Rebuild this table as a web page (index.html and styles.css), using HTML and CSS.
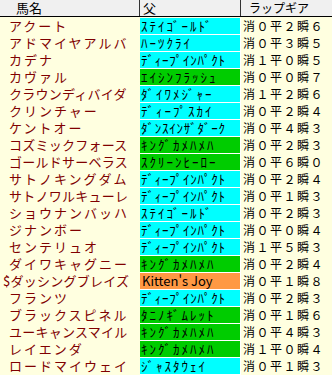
FILE: index.html
```html
<!DOCTYPE html>
<html lang="ja">
<head>
<meta charset="utf-8">
<title>ラップギア</title>
<link rel="stylesheet" href="styles.css">
</head>
<body>
<div class="table">
  <div class="head">
    <div class="h h-name">馬名</div>
    <div class="h h-sire">父</div>
    <div class="h h-lap">ラップギア</div>
  </div>
  <div class="row"><div class="name">アクート</div><div class="sire cyan">ｽﾃｲｺﾞｰﾙﾄﾞ</div><div class="lap">消０平２瞬６</div></div>
  <div class="row"><div class="name">アドマイヤアルバ</div><div class="sire cyan">ﾊｰﾂｸﾗｲ</div><div class="lap">消０平３瞬５</div></div>
  <div class="row"><div class="name">カデナ</div><div class="sire cyan tight">ﾃﾞｨｰﾌﾟｲﾝﾊﾟｸﾄ</div><div class="lap">消１平０瞬５</div></div>
  <div class="row"><div class="name">カヴァル</div><div class="sire green">ｴｲｼﾝﾌﾗｯｼｭ</div><div class="lap">消０平０瞬７</div></div>
  <div class="row"><div class="name tight">クラウンディバイダ</div><div class="sire cyan">ﾀﾞｲﾜﾒｼﾞｬｰ</div><div class="lap">消１平２瞬６</div></div>
  <div class="row"><div class="name">クリンチャー</div><div class="sire cyan">ﾃﾞｨｰﾌﾟｽｶｲ</div><div class="lap">消０平２瞬４</div></div>
  <div class="row"><div class="name">ケントオー</div><div class="sire cyan tight">ﾀﾞﾝｽｲﾝｻﾞﾀﾞｰｸ</div><div class="lap">消０平４瞬３</div></div>
  <div class="row"><div class="name tight">コズミックフォース</div><div class="sire green">ｷﾝｸﾞｶﾒﾊﾒﾊ</div><div class="lap">消０平２瞬３</div></div>
  <div class="row"><div class="name tight">ゴールドサーベラス</div><div class="sire green">ｽｸﾘｰﾝﾋｰﾛｰ</div><div class="lap">消０平６瞬０</div></div>
  <div class="row"><div class="name">サトノキングダム</div><div class="sire cyan tight">ﾃﾞｨｰﾌﾟｲﾝﾊﾟｸﾄ</div><div class="lap">消０平２瞬４</div></div>
  <div class="row"><div class="name tight">サトノワルキューレ</div><div class="sire cyan tight">ﾃﾞｨｰﾌﾟｲﾝﾊﾟｸﾄ</div><div class="lap">消０平１瞬３</div></div>
  <div class="row"><div class="name">ショウナンバッハ</div><div class="sire cyan">ｽﾃｲｺﾞｰﾙﾄﾞ</div><div class="lap">消０平２瞬３</div></div>
  <div class="row"><div class="name">ジナンボー</div><div class="sire cyan tight">ﾃﾞｨｰﾌﾟｲﾝﾊﾟｸﾄ</div><div class="lap">消０平０瞬４</div></div>
  <div class="row"><div class="name">センテリュオ</div><div class="sire cyan tight">ﾃﾞｨｰﾌﾟｲﾝﾊﾟｸﾄ</div><div class="lap">消１平５瞬３</div></div>
  <div class="row"><div class="name">ダイワキャグニー</div><div class="sire green">ｷﾝｸﾞｶﾒﾊﾒﾊ</div><div class="lap">消０平２瞬４</div></div>
  <div class="row"><div class="name tight dollar">$ダッシングブレイズ</div><div class="sire orange latin">Kitten's Joy</div><div class="lap">消０平１瞬８</div></div>
  <div class="row"><div class="name">フランツ</div><div class="sire cyan tight">ﾃﾞｨｰﾌﾟｲﾝﾊﾟｸﾄ</div><div class="lap">消０平２瞬３</div></div>
  <div class="row"><div class="name">ブラックスピネル</div><div class="sire green">ﾀﾆﾉｷﾞﾑﾚｯﾄ</div><div class="lap">消０平１瞬６</div></div>
  <div class="row"><div class="name tight">ユーキャンスマイル</div><div class="sire green">ｷﾝｸﾞｶﾒﾊﾒﾊ</div><div class="lap">消０平４瞬３</div></div>
  <div class="row"><div class="name">レイエンダ</div><div class="sire green">ｷﾝｸﾞｶﾒﾊﾒﾊ</div><div class="lap">消１平０瞬４</div></div>
  <div class="row"><div class="name">ロードマイウェイ</div><div class="sire cyan">ｼﾞｬｽﾀｳｪｲ</div><div class="lap">消０平１瞬３</div></div>
</div>
</body>
</html>
```
FILE: styles.css
```css
* {
  box-sizing: border-box;
}

html, body {
  margin: 0;
  padding: 0;
  background: #ffffe0;
}

body {
  font-family: "Noto Sans CJK JP", "Noto Sans", sans-serif;
  width: 332px;
  height: 375px;
}

.table {
  display: flex;
  flex-direction: column;
}

.head {
  display: grid;
  grid-template-columns: 140px 101px 1fr;
  height: 17px;
  background: #f0f0f0;
  border-bottom: 1px solid #000;
  margin-bottom: 1px;
}

.h {
  font-size: 13px;
  line-height: 16px;
  color: #000;
  white-space: nowrap;
}

.h-name {
  padding-left: 16px;
  border-right: 1px solid #333;
}

.h-sire {
  padding-left: 3px;
  border-right: 1px solid #333;
}

.h-lap {
  padding-left: 8px;
  font-size: 12px;
}

.row {
  display: grid;
  grid-template-columns: 140px 101px 1fr;
  height: 17px;
}

.name {
  padding-left: 9px;
  font-size: 13px;
  line-height: 16px;
  letter-spacing: 2px;
  color: #800000;
  white-space: nowrap;
}

.name.tight {
  letter-spacing: 0.25px;
}

.name.dollar {
  padding-left: 3px;
}

.sire {
  padding-left: 1px;
  font-size: 13px;
  line-height: 16px;
  letter-spacing: 2px;
  color: #000;
  white-space: nowrap;
  border-right: 1px solid #fff;
  border-bottom: 1px solid #fff;
}

.sire.tight {
  letter-spacing: 0.75px;
}

.sire.latin {
  letter-spacing: 0;
  padding-left: 2px;
}

.cyan {
  background: #00ffff;
}

.green {
  background: #00cc00;
}

.orange {
  background: #ff9944;
}

.lap {
  padding-left: 2px;
  font-size: 12px;
  line-height: 16px;
  letter-spacing: 1.5px;
  color: #000;
  white-space: nowrap;
}
```
